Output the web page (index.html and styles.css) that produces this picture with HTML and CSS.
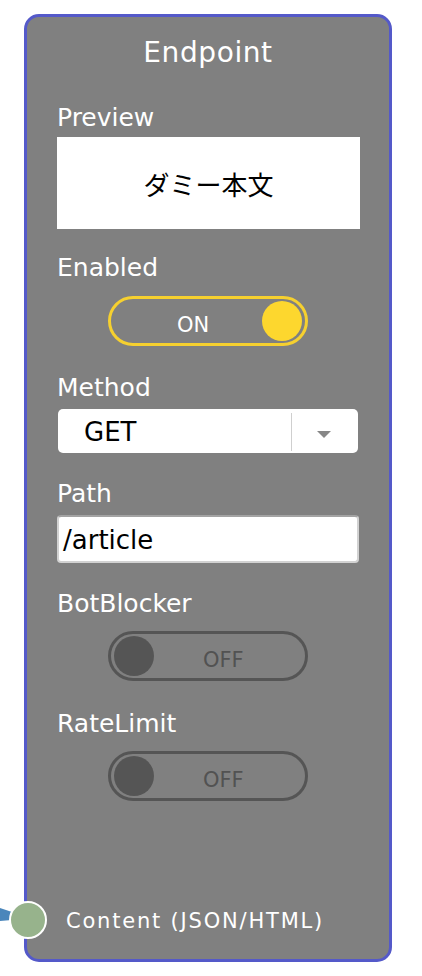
FILE: index.html
```html
<!DOCTYPE html>
<html lang="ja">
<head>
<meta charset="utf-8">
<title>Endpoint</title>
<link rel="stylesheet" href="styles.css">
</head>
<body>
<div class="node">
  <div class="node-title">Endpoint</div>

  <div class="label">Preview</div>
  <div class="preview">ダミー本文</div>

  <div class="label gap-24">Enabled</div>
  <div class="toggle toggle-on">
    <span class="toggle-text">ON</span>
    <span class="knob"></span>
  </div>

  <div class="label gap-27">Method</div>
  <div class="select">
    <span class="select-value">GET</span>
    <span class="select-divider"></span>
    <span class="select-arrow"></span>
  </div>

  <div class="label gap-26">Path</div>
  <div class="text-input">/article</div>

  <div class="label gap-26">BotBlocker</div>
  <div class="toggle toggle-off">
    <span class="knob"></span>
    <span class="toggle-text">OFF</span>
  </div>

  <div class="label gap-28">RateLimit</div>
  <div class="toggle toggle-off">
    <span class="knob"></span>
    <span class="toggle-text">OFF</span>
  </div>

  <div class="port">
    <svg class="edge" width="12" height="16" viewBox="0 0 12 16"><polygon points="0,1 12,5 12,13 0,14" fill="#4a86bb"/></svg>
    <span class="port-dot"></span>
    <span class="port-label">Content (JSON/HTML)</span>
  </div>
</div>
</body>
</html>
```

FILE: styles.css
```css
html, body {
  margin: 0;
  padding: 0;
  background: #ffffff;
}

body {
  font-family: "DejaVu Sans", "Noto Sans CJK JP", sans-serif;
}

.node {
  box-sizing: border-box;
  width: 368px;
  height: 948px;
  margin: 14px 0 0 24px;
  border: 3px solid #5459c9;
  border-radius: 15px;
  background: #808080;
  padding: 19px 29px 25px 30px;
  display: flex;
  flex-direction: column;
  color: #ffffff;
}

.node-title {
  font-size: 28px;
  line-height: 34px;
  letter-spacing: 0.6px;
  text-align: center;
  margin-left: -1px;
}

.label {
  font-size: 25px;
  line-height: 30px;
  margin-top: 33px;
  color: #ffffff;
}

.gap-24 { margin-top: 24px; }
.gap-26 { margin-top: 26px; }
.gap-27 { margin-top: 27px; }
.gap-28 { margin-top: 28px; }

.preview {
  margin-top: 4px;
  height: 92px;
  background: #ffffff;
  color: #000000;
  display: flex;
  align-items: center;
  justify-content: center;
  font-family: "Noto Sans CJK JP", sans-serif;
  font-size: 26px;
}

.toggle {
  box-sizing: border-box;
  width: 200px;
  height: 50px;
  margin: 12px 0 0 51px;
  border: 3px solid #555555;
  border-radius: 25px;
  display: flex;
  align-items: center;
}

.toggle-on {
  border-color: #f6d02f;
  margin-top: 13px;
}

.toggle-text {
  font-size: 21px;
  line-height: 24px;
  padding-top: 7px;
}

.knob {
  width: 40px;
  height: 40px;
  border-radius: 50%;
  background: #555555;
}

.toggle-on .toggle-text {
  color: #ffffff;
  margin-left: 66px;
}

.toggle-on .knob {
  background: #fdd72e;
  margin-left: auto;
  margin-right: 3px;
}

.toggle-off .knob {
  margin-left: 3px;
}

.toggle-off .toggle-text {
  color: #525252;
  margin-left: 49px;
}

.select {
  box-sizing: border-box;
  width: 300px;
  height: 44px;
  margin: 6px 0 0 1px;
  background: #ffffff;
  border-radius: 5px;
  display: flex;
  align-items: center;
  color: #000000;
}

.select-value {
  font-size: 26px;
  line-height: 30px;
  padding-left: 26px;
  width: 207px;
  margin-top: 2px;
}

.select-divider {
  width: 1px;
  align-self: stretch;
  margin: 4px 0 2px 0;
  background: #cfcfcf;
}

.select-arrow {
  width: 0;
  height: 0;
  margin: 6px 0 0 25px;
  border-left: 7.5px solid transparent;
  border-right: 7.5px solid transparent;
  border-top: 7px solid #878787;
}

.text-input {
  box-sizing: border-box;
  width: 302px;
  height: 48px;
  margin-top: 6px;
  background: #ffffff;
  border: 2px solid #d2d2d2;
  border-top-color: #a3a3a3;
  border-radius: 4px;
  color: #000000;
  font-size: 26px;
  line-height: 30px;
  padding: 8px 0 0 4px;
}

.port {
  position: relative;
  margin-top: auto;
  height: 26px;
  display: flex;
  align-items: center;
}

.edge {
  position: absolute;
  left: -57px;
  top: -1px;
}

.port-dot {
  position: absolute;
  left: -48px;
  top: 50%;
  box-sizing: border-box;
  width: 38px;
  height: 38px;
  margin-top: -20px;
  border-radius: 50%;
  border: 2px solid #ffffff;
  background: #97b38c;
}

.port-label {
  font-size: 21px;
  line-height: 26px;
  letter-spacing: 1.8px;
  padding-left: 9px;
  color: #ffffff;
}
```
